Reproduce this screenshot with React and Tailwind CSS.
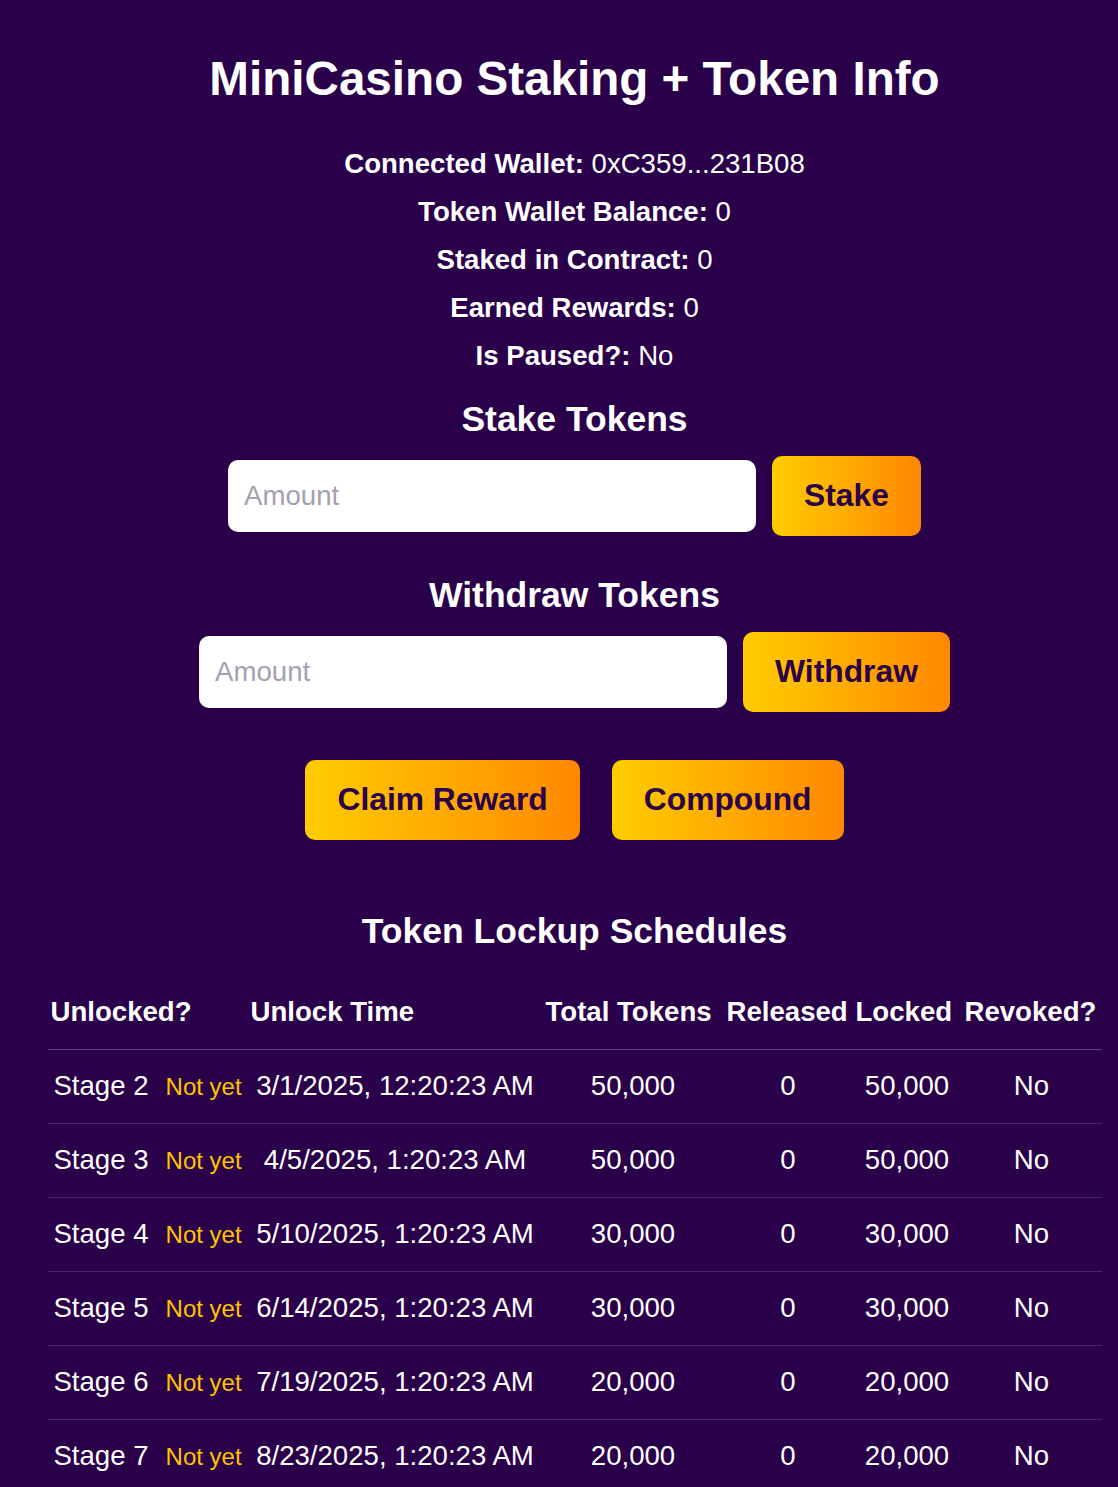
import React from "react";

const schedules = [
  { stage: "Stage 2", time: "3/1/2025, 12:20:23 AM", total: "50,000", released: "0", locked: "50,000", revoked: "No" },
  { stage: "Stage 3", time: "4/5/2025, 1:20:23 AM", total: "50,000", released: "0", locked: "50,000", revoked: "No" },
  { stage: "Stage 4", time: "5/10/2025, 1:20:23 AM", total: "30,000", released: "0", locked: "30,000", revoked: "No" },
  { stage: "Stage 5", time: "6/14/2025, 1:20:23 AM", total: "30,000", released: "0", locked: "30,000", revoked: "No" },
  { stage: "Stage 6", time: "7/19/2025, 1:20:23 AM", total: "20,000", released: "0", locked: "20,000", revoked: "No" },
  { stage: "Stage 7", time: "8/23/2025, 1:20:23 AM", total: "20,000", released: "0", locked: "20,000", revoked: "No" },
];

const info = [
  ["Connected Wallet:", "0xC359...231B08"],
  ["Token Wallet Balance:", "0"],
  ["Staked in Contract:", "0"],
  ["Earned Rewards:", "0"],
  ["Is Paused?:", "No"],
];

const btnClass =
  "h-[80px] px-8 rounded-[10px] bg-gradient-to-r from-[#ffcc00] to-[#ff8800] text-[#2a004a] text-[31.8px] font-bold leading-none whitespace-nowrap";

const inputClass =
  "w-[528px] h-[72px] px-4 rounded-[10px] bg-white text-[27.6px] text-[#2a004a] placeholder:text-[#a59fb0] outline-none";

function AmountRow({ label }) {
  return (
    <div className="flex items-center gap-4 h-[80px]">
      <input type="text" placeholder="Amount" className={inputClass} />
      <button className={btnClass}>{label}</button>
    </div>
  );
}

export default function App() {
  return (
    <div className="min-h-screen bg-[#2a004a] text-white font-['Liberation_Sans',Arial,sans-serif]">
      <div className="ml-[47px] w-[1055px] flex flex-col items-center pt-[51px] pb-[40px]">
        <h1 className="text-[47.6px] font-bold leading-[56px]">
          MiniCasino Staking + Token Info
        </h1>

        <div className="mt-[33px] flex flex-col items-center">
          {info.map(([k, v]) => (
            <p key={k} className="text-[27.6px] leading-[48px]">
              <span className="font-bold">{k}</span> {v}
            </p>
          ))}
        </div>

        <h2 className="mt-[17px] text-[35.5px] font-bold leading-[44px]">
          Stake Tokens
        </h2>
        <div className="mt-[15px]">
          <AmountRow label="Stake" />
        </div>

        <h2 className="mt-[37px] text-[35.5px] font-bold leading-[44px]">
          Withdraw Tokens
        </h2>
        <div className="mt-[15px]">
          <AmountRow label="Withdraw" />
        </div>

        <div className="mt-[48px] flex gap-8">
          <button className={btnClass}>Claim Reward</button>
          <button className={btnClass}>Compound</button>
        </div>

        <h2 className="mt-[69px] text-[35.5px] font-bold leading-[44px]">
          Token Lockup Schedules
        </h2>

        <table className="mt-[22px] w-[1054px] table-fixed border-collapse text-[27.6px]">
          <colgroup>
            <col className="w-[200px]" />
            <col className="w-[295px]" />
            <col className="w-[181px]" />
            <col className="w-[129px]" />
            <col className="w-[109px]" />
            <col className="w-[140px]" />
          </colgroup>
          <thead>
            <tr className="h-[74px] border-b border-white/25">
              {["Unlocked?", "Unlock Time", "Total Tokens", "Released", "Locked", "Revoked?"].map((h) => (
                <th key={h} className="text-left pl-[3px] font-bold whitespace-nowrap">
                  {h}
                </th>
              ))}
            </tr>
          </thead>
          <tbody>
            {schedules.map((s) => (
              <tr key={s.stage} className="h-[74px] border-b border-white/15 text-center">
                <td className="whitespace-nowrap">
                  {s.stage}
                  <span className="ml-[17px] text-[24px] text-[#ffc400]">Not yet</span>
                </td>
                <td className="whitespace-nowrap">{s.time}</td>
                <td>{s.total}</td>
                <td>{s.released}</td>
                <td>{s.locked}</td>
                <td>{s.revoked}</td>
              </tr>
            ))}
          </tbody>
        </table>
      </div>
    </div>
  );
}
